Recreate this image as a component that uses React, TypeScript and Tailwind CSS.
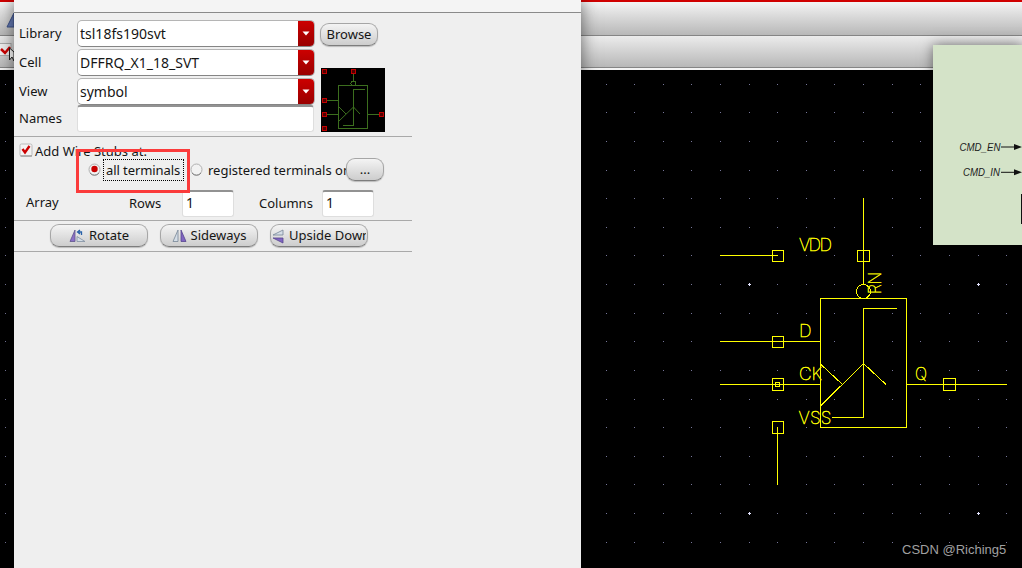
import type { ReactNode } from "react";

const GRID_X = [5, 606, 634, 663, 691, 720, 749, 777, 806, 834, 863, 892, 920, 949, 978, 1006];
const GRID_Y = [84, 112, 141, 170, 198, 227, 255, 284, 313, 341, 370, 399, 427, 456, 484, 513, 542];
const MAJOR = [
  [749, 284],
  [978, 284],
  [749, 513],
  [978, 513],
];

function Schematic() {
  return (
    <svg className="absolute inset-0" width="1022" height="568" shapeRendering="crispEdges">
      <g fill="#77779a">
        {GRID_X.map((x) => GRID_Y.map((y) => <rect key={`${x}-${y}`} x={x} y={y} width="1" height="1" />))}
      </g>
      <g fill="#e4e4ff">
        {MAJOR.map(([x, y]) => (
          <path key={`${x}-${y}`} d={`M${x - 1} ${y}h3v1h-3zM${x} ${y - 1}h1v3h-1z`} />
        ))}
      </g>
      <g fill="none" stroke="#ffff00" strokeWidth="1">
        <path d="M720 255.5H778M863.5 198V284M720 341.5H820M720 384.5H820M907 384.5H1007M777.5 427V485" />
        <rect x="820.5" y="298.5" width="86" height="129" />
        <rect x="772.5" y="250.5" width="11" height="11" />
        <rect x="857.5" y="250.5" width="12" height="11" />
        <rect x="772.5" y="336.5" width="11" height="11" />
        <rect x="772.5" y="378.5" width="11" height="12" />
        <rect x="775.5" y="382.5" width="4" height="4" />
        <rect x="772.5" y="421.5" width="11" height="12" />
        <rect x="943.5" y="378.5" width="12" height="12" />
        <circle cx="863.5" cy="291.5" r="7" />
        <path d="M897 308.5H863.5V417.5H832" />
        <path d="M821 364.5L842.5 384.5M821 405.5L863.5 363.5L886 384.5" />
      </g>
      <g fill="#ffff00" stroke="#ffff00" strokeWidth="0.450" fontFamily="Inter, sans-serif" fontWeight="100" fontSize="17.5">
        <text x="799" y="250.5" textLength="33">VDD</text>
        <text x="799" y="337">D</text>
        <text x="799" y="379.5" textLength="23">CK</text>
        <text x="798.5" y="423.5" textLength="33">VSS</text>
        <text x="915" y="379.5" textLength="12" lengthAdjust="spacingAndGlyphs">Q</text>
        <text transform="translate(881 294) rotate(-90)" textLength="22" lengthAdjust="spacingAndGlyphs">RN</text>
      </g>
    </svg>
  );
}

function Combo({ value }: { value: string }) {
  return (
    <div className="flex h-[27px] w-[238px] overflow-hidden rounded-[5px] border border-[#b5b5b5] border-b-[#858585] bg-white">
      <span className="flex-1 pl-0.5 text-[14px] leading-[25px]">{value}</span>
      <span className="flex w-4 items-center justify-center bg-gradient-to-b from-[#cc0000] to-[#990000]">
        <svg width="8" height="5">
          <path d="M0.500 0.500H7.500L4 4.500Z" fill="#fff" />
        </svg>
      </span>
    </div>
  );
}

function Field({ value, className }: { value?: string; className: string }) {
  return (
    <div className={`rounded-[3px] border border-t-2 border-[#dedede] border-t-[#929292] bg-white pl-[3px] text-[14px] leading-[22px] ${className}`}>
      {value}
    </div>
  );
}

function Button({ children, className }: { children: ReactNode; className: string }) {
  return (
    <button
      className={`flex h-[23px] items-center justify-center overflow-hidden whitespace-nowrap rounded-[9px] border border-[#a6a6a6] border-b-[#7d7d7d] bg-gradient-to-b from-[#f4f4f4] to-[#cdcdcd] pt-px shadow-[0_1px_1px_#bbb] ${className}`}
    >
      {children}
    </button>
  );
}

function Separator() {
  return <div className="h-px w-[398px] bg-[#a9a9a9]" />;
}

function Preview() {
  return (
    <svg width="64" height="64" className="ml-px bg-black">
      <g fill="none" stroke="#3c6e1e" shapeRendering="crispEdges">
        <rect x="17.5" y="17.5" width="29" height="43" />
        <path d="M32.5 4V13M4 32.5H17M4 46.5H17M47 46.5H60M44 21.5H32.5V57.5H22" />
        <circle cx="32.5" cy="15.5" r="2.5" />
      </g>
      <path d="M18 39L25 46M18 53L32.5 39L39 46" fill="none" stroke="#3c6e1e" />
      <g fill="#500000" stroke="#c00000" shapeRendering="crispEdges">
        <path d="M1.500 1.500h4v4h-4zM30.500 1.500h4v4h-4zM1.500 30.500h4v4h-4zM1.500 44.500h4v4h-4zM58.500 44.500h4v4h-4zM1.500 58.500h4v4h-4z" />
      </g>
    </svg>
  );
}

function Check() {
  return (
    <svg width="14" height="14">
      <rect x="1" y="1" width="12" height="12" rx="1.500" fill="#f3f3f3" stroke="#bbb" />
      <path d="M1.500 13H13" stroke="#888" />
      <path d="M3.500 6L6 9.500L10.500 3" fill="none" stroke="#cc0000" strokeWidth="2.400" />
    </svg>
  );
}

function Radio({ checked }: { checked?: boolean }) {
  return (
    <svg width="13" height="13">
      <circle cx="6.500" cy="6.500" r="5.500" fill="#f2f2f2" stroke="#b0b0b0" />
      <path d="M2 10A5.500 5.500 0 0 0 11 10" fill="none" stroke="#858585" />
      {checked && <circle cx="6.500" cy="6" r="3.200" fill="#c80000" />}
    </svg>
  );
}

function RotateIcon() {
  return (
    <svg width="17" height="14">
      <path d="M6 1V12.500H1Z" fill="#8b70c8" stroke="#60568c" strokeWidth=".8" />
      <path d="M8 7.500V12.500H16Z" fill="#d4dde6" stroke="#8191a2" strokeWidth=".8" />
      <path d="M9 3H12.500V6M11 1L8.500 3L11 5" fill="none" stroke="#2861a8" strokeWidth="1.300" />
    </svg>
  );
}

function SidewaysIcon() {
  return (
    <svg width="15" height="14">
      <path d="M6 1V12.500H1Z" fill="#d4dde6" stroke="#778797" strokeWidth=".8" />
      <path d="M9 1V12.500H14Z" fill="#8065c2" stroke="#57458e" strokeWidth=".8" />
    </svg>
  );
}

function UpsideIcon() {
  return (
    <svg width="12" height="15" className="shrink-0">
      <path d="M11 1V6H1Z" fill="#d4dde6" stroke="#778797" strokeWidth=".8" />
      <path d="M1 9H11V14Z" fill="#8065c2" stroke="#57458e" strokeWidth=".8" />
    </svg>
  );
}

function Dialog() {
  return (
    <section className="absolute left-[14px] top-0 h-[568px] w-[567px] bg-[#efefef] shadow-[0_0_16px_rgba(0,0,0,0.55)]">
      <div className="h-[13px] border-b border-[#8a8a8a] bg-[#f4f4f4]" />
      <div className="flex h-[123px] pt-[7px]">
        <div className="flex w-[63px] flex-col pl-[5px]">
          <span className="h-[29px] leading-[27px]">Library</span>
          <span className="h-[29px] leading-[27px]">Cell</span>
          <span className="h-[28px] leading-[27px]">View</span>
          <span className="leading-[24px]">Names</span>
        </div>
        <div className="flex flex-col">
          <div className="flex flex-col gap-[2px]">
            <Combo value="tsl18fs190svt" />
            <Combo value="DFFRQ_X1_18_SVT" />
            <Combo value="symbol" />
          </div>
          <Field className="h-[27px] w-[237px]" />
        </div>
        <div className="flex flex-col gap-[22px] pl-[5px] pt-[3px]">
          <Button className="w-[58px]">Browse</Button>
          <Preview />
        </div>
      </div>
      <Separator />
      <div className="flex h-[20px] items-start pl-[5px] pt-[6px]">
        <Check />
        <span className="ml-[2px] leading-[17px]">Add Wire Stubs at:</span>
      </div>
      <div className="flex h-[31px] items-start pl-[74px]">
        <div className="flex pt-[6px]">
          <Radio checked />
        </div>
        <span className="ml-[2px] mt-[2px] h-[22px] w-[81px] whitespace-nowrap border border-dotted border-black pl-[2px] leading-[20px] tracking-[-0.08px]">all terminals</span>
        <div className="flex pl-[6px] pt-[6px]">
          <Radio />
        </div>
        <span className="ml-[5px] mt-[3px] w-[138px] overflow-hidden whitespace-nowrap leading-[20px]">registered terminals only</span>
        <Button className="mt-px w-[38px] shrink-0">...</Button>
      </div>
      <div className="flex h-[32px] items-start pl-[12px] pt-[2px]">
        <span className="w-[103px] leading-[24px]">Array</span>
        <span className="w-[53px] leading-[27px]">Rows</span>
        <Field value="1" className="h-[27px] w-[52px]" />
        <span className="w-[88px] pl-[25px] leading-[27px]">Columns</span>
        <Field value="1" className="h-[27px] w-[52px]" />
      </div>
      <Separator />
      <div className="flex h-[30px] gap-[12px] pl-[36px] pt-[3px]">
        <Button className="w-[98px] gap-[3px]"><RotateIcon />Rotate</Button>
        <Button className="w-[98px] gap-[4px]"><SidewaysIcon />Sideways</Button>
        <Button className="w-[98px]">
          <span className="flex w-[94px] items-center gap-[5px] overflow-hidden"><UpsideIcon /><span>Upside Down</span></span>
        </Button>
      </div>
      <Separator />
      <div className="absolute left-[62px] top-[149px] h-[44px] w-[114px] border-[3px] border-[#fb3b3b]" />
    </section>
  );
}

function Datasheet() {
  return (
    <aside className="absolute left-[933px] top-[45px] h-[200px] w-[89px] bg-[#d4e3c8] shadow-[0_0_12px_rgba(0,0,0,0.5)]">
      <svg width="89" height="200">
        <g fill="#202020" fontFamily="Liberation Sans, Arial, sans-serif" fontStyle="italic" fontSize="10">
          <text x="26.500" y="106" textLength="41" lengthAdjust="spacingAndGlyphs">CMD_EN</text>
          <text x="30" y="131" textLength="37" lengthAdjust="spacingAndGlyphs">CMD_IN</text>
        </g>
        <path d="M68 102H83M68 127.300H83" stroke="#111" />
        <path d="M81 99L89 102L81 105ZM81 124.300L89 127.300L81 130.300ZM88 149h1v30h-1z" fill="#111" />
      </svg>
    </aside>
  );
}

export default function App() {
  return (
    <main className="relative h-[568px] w-[1022px] overflow-hidden bg-black font-['Noto_Sans',sans-serif] text-[13px] text-[#151515]">
      <Schematic />
      <div className="relative h-[70px]">
        <div className="h-[2px] bg-[#d00000]" />
        <div className="h-[34px] border-b border-[#858585] bg-gradient-to-b from-[#f4f4f4] to-[#b8b8b8]">
          <svg width="14" height="33">
            <path d="M14 11L7 25H14Z" fill="#657ab5" stroke="#3c5288" />
          </svg>
        </div>
        <div className="h-[32px] border-b border-[#858585] bg-gradient-to-b from-[#ececec] to-[#b8b8b8]">
          <svg width="14" height="31">
            <rect x="-1" y="7.500" width="12" height="12" fill="#eee" stroke="#aaa" />
            <path d="M1 13L5 17L10 11" fill="none" stroke="#cc0000" strokeWidth="2.500" />
            <path d="M9.500 12V24L12 21L14 25V16Z" fill="#fff" stroke="#222" />
          </svg>
        </div>
        <div className="h-[2px] bg-[#f3f3f3]" />
      </div>
      <Datasheet />
      <Dialog />
      <div className="absolute left-[902px] top-[541px] whitespace-nowrap font-['Liberation_Sans',sans-serif] text-[13px] leading-[18px] text-[#a0a0a0]">CSDN @Riching5</div>
    </main>
  );
}
